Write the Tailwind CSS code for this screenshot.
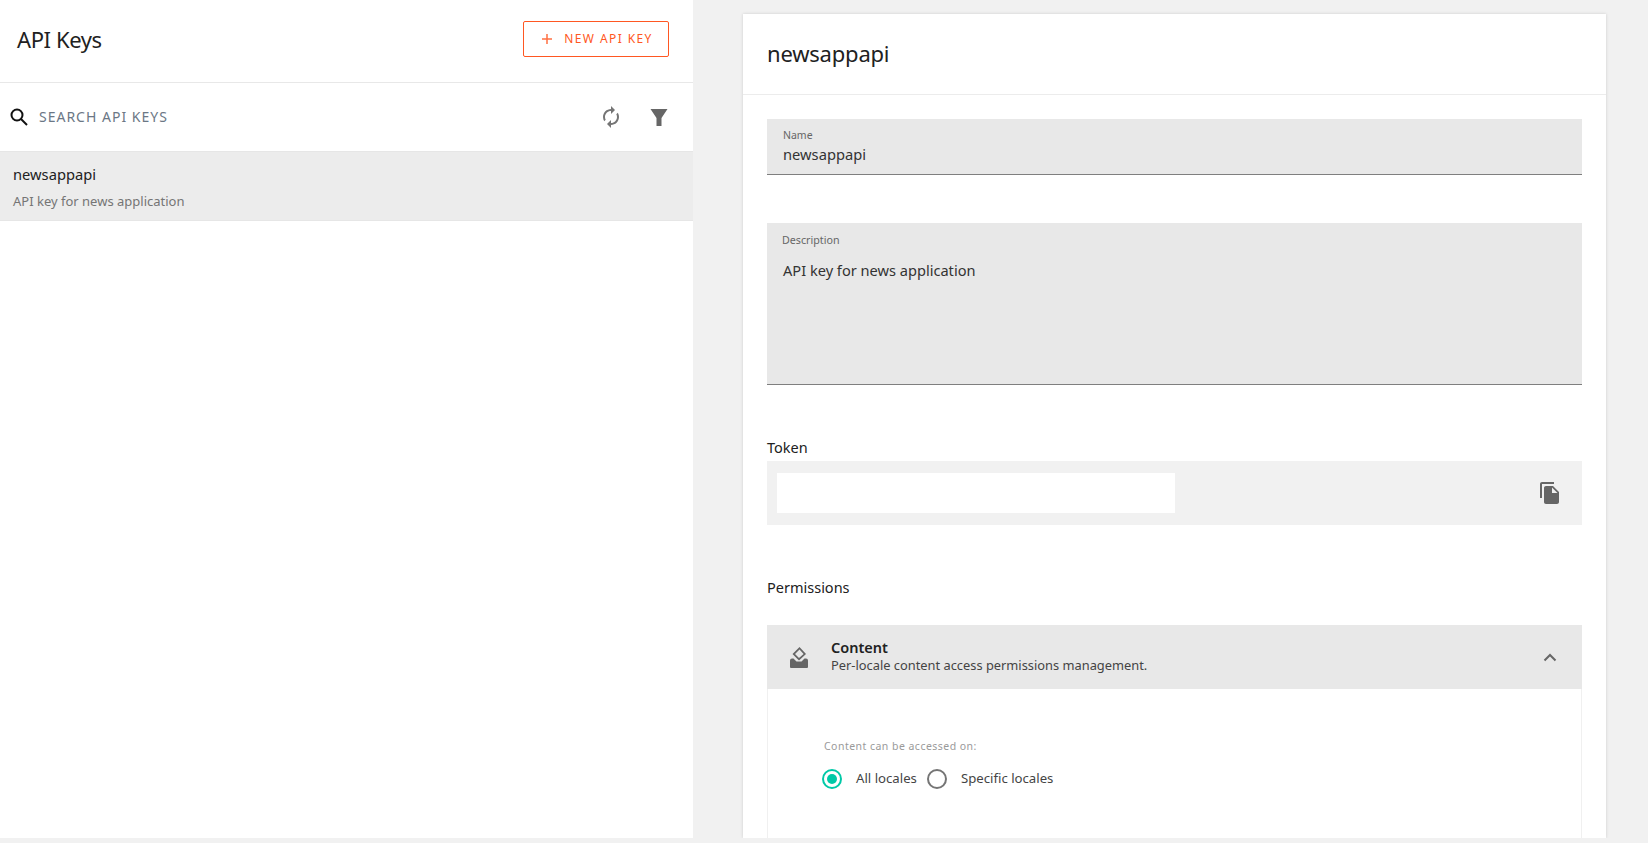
<!DOCTYPE html>
<html lang="en">
<head>
  <meta charset="UTF-8" />
  <title>API Keys</title>
  <script src="https://cdn.jsdelivr.net/npm/@tailwindcss/browser@4"></script>
</head>
<body class="bg-[#f1f1f1] h-[843px] overflow-hidden font-['Noto_Sans',sans-serif] text-[#212121]">
  <div class="flex h-[838px] overflow-hidden">
    <!-- left list -->
    <aside class="w-[693px] bg-white shrink-0">
      <header class="h-[83px] border-b border-[#e8e8e8] flex items-center justify-between pl-[17px] pr-[24px]">
        <h1 class="text-[22px] tracking-[-0.4px] -mt-[4px]">API Keys</h1>
        <button class="w-[146px] h-[36px] -mt-[4px] border border-[#ff5722] rounded-[2px] flex items-center justify-center gap-[11px] pl-[2px] text-[#ff5722] text-[12px] tracking-[1.4px]">
          <svg width="12" height="12" viewBox="0 0 12 12" fill="none" stroke="#ff7043" stroke-width="1.5"><path d="M6 1v10M1 6h10"/></svg>
          NEW API KEY
        </button>
      </header>
      <div class="h-[68px] flex items-center pl-[9px] pr-[22px]">
        <svg width="20" height="20" viewBox="0 0 20 20" fill="none" stroke="#111" stroke-width="2"><circle cx="8" cy="8" r="5.5"/><path d="M12 12l6 6"/></svg>
        <span class="ml-[10px] -mt-[2px] text-[14px] tracking-[1px] text-[#6b7785] flex-1">SEARCH API KEYS</span>
        <svg width="24" height="24" viewBox="0 0 24 24" fill="#757575"><path d="M12 6v3l4-4-4-4v3c-4.42 0-8 3.58-8 8 0 1.57.46 3.03 1.24 4.26L6.7 14.8c-.45-.83-.7-1.790-.7-2.800 0-3.310 2.690-6 6-6zm6.760 1.740L17.300 9.200c.44.840.7 1.790.7 2.800 0 3.310-2.690 6-6 6v-3l-4 4 4 4v-3c4.420 0 8-3.580 8-8 0-1.570-.46-3.030-1.240-4.260z"/></svg>
        <svg class="ml-[24px]" width="24" height="24" viewBox="0 0 24 24" fill="#666"><path d="M3.500 4h17L14.500 13v8h-5v-8z"/></svg>
      </div>
      <div class="h-[70px] bg-[#ececec] border-y border-[#e6e6e6] pl-[13px] pt-[12px]">
        <div class="text-[14.700px] leading-[20px]">newsappapi</div>
        <div class="text-[13px] leading-[16px] mt-[9px] text-[#757575]">API key for news application</div>
      </div>
    </aside>

    <!-- right detail card -->
    <main class="ml-[50px] mt-[14px] w-[863px] bg-white shadow-[0_0_3px_rgba(0,0,0,0.15)]">
      <header class="h-[81px] border-b border-[#ececec] flex items-center pl-[24px]">
        <h2 class="text-[22px] tracking-[-0.2px] -mt-[1px]">newsappapi</h2>
      </header>
      <div class="px-[24px] pt-[24px]">
        <div class="h-[56px] bg-[#e8e8e8] border-b border-[#7f7f7f] pl-[16px] pt-[10px]">
          <div class="text-[10.500px] leading-[12px] text-[#666]">Name</div>
          <div class="text-[14.700px] leading-[20px] mt-[3px] text-[#333]">newsappapi</div>
        </div>
        <div class="h-[162px] mt-[48px] bg-[#e8e8e8] border-b border-[#7f7f7f] pl-[15px] pt-[11px]">
          <div class="text-[10.700px] leading-[12px] text-[#666]">Description</div>
          <div class="text-[14.600px] leading-[20px] mt-[14px] pl-[1px] text-[#333]">API key for news application</div>
        </div>
        <div class="text-[14.500px] leading-[20px] mt-[52px]">Token</div>
        <div class="h-[64px] mt-[4px] bg-[#f1f1f1] flex items-center justify-between pl-[10px] pr-[20px]">
          <div class="w-[398px] h-[40px] bg-white"></div>
          <svg width="24" height="24" viewBox="0 0 24 24" fill="#666"><path d="M16 1H4c-1.100 0-2 .9-2 2v14h2V3h12V1zm-1 4l6 6v10c0 1.100-.9 2-2 2H7.990C6.890 23 6 22.100 6 21l.01-14c0-1.100.89-2 1.990-2h7zm-1 7h5.500L14 6.500V12z"/></svg>
        </div>
        <div class="text-[14.500px] leading-[20px] mt-[52px]">Permissions</div>
        <div class="mt-[28px] border-x border-[#f0f0f0] h-[300px]">
          <div class="h-[64px] -mx-px bg-[#e8e8e8] flex items-center pl-[23px] pr-[25px]">
            <svg width="18" height="21" viewBox="0 0 18 21" fill="#666"><path d="M9.500 0L16 7 9 13.500 2.500 7zM9.500 2.400L5 7l4 4.100L13.600 7z" fill-rule="evenodd"/><path d="M2 11.500h1.500L6.500 14.500h5l3-3H16a2 2 0 0 1 2 2V20a1 1 0 0 1-1 1H1a1 1 0 0 1-1-1v-6.500a2 2 0 0 1 2-2z"/></svg>
            <div class="ml-[23px] flex-1 -mt-[2px]">
              <div class="text-[14.500px] leading-[17px] font-semibold">Content</div>
              <div class="text-[12.850px] leading-[18px] text-[#444]">Per-locale content access permissions management.</div>
            </div>
            <svg width="14" height="9" viewBox="0 0 14 9" fill="none" stroke="#666" stroke-width="2"><path d="M1.500 7.500L7 2l5.500 5.500"/></svg>
          </div>
          <div class="pl-[56px] pt-[50px]">
            <div class="text-[10.500px] leading-[14px] text-[#9a9a9a] tracking-[0.47px]">Content can be accessed on:</div>
            <div class="flex items-center mt-[16px] text-[13.200px] text-[#444] -ml-[2px]">
              <span class="w-[20px] h-[20px] rounded-full border-2 border-[#00c9a7] flex items-center justify-center"><span class="w-[10px] h-[10px] rounded-full bg-[#00c9a7]"></span></span>
              <span class="ml-[14px]">All locales</span>
              <span class="ml-[10px] w-[20px] h-[20px] rounded-full border-2 border-[#757575]"></span>
              <span class="ml-[14px]">Specific locales</span>
            </div>
          </div>
        </div>
      </div>
    </main>
  </div>
</body>
</html>
